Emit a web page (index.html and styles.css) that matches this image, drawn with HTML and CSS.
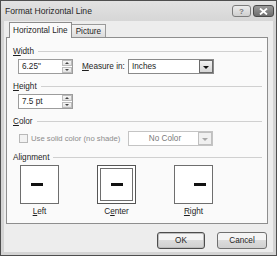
FILE: index.html
```html
<!DOCTYPE html>
<html lang="en">
<head>
    <meta charset="UTF-8">
    <title>Format Horizontal Line</title>
    <link rel="stylesheet" href="styles.css">
</head>
<body>
    <div class="window">
        <!-- Title bar -->
        <div class="titlebar">
            <span class="title">Format Horizontal Line</span>
            <span class="cap-btn help">?</span>
            <span class="cap-btn close">
                <svg width="9" height="7" viewBox="0 0 9 7"><path d="M1 0.5 L8 6.5 M8 0.5 L1 6.5" stroke="#fff" stroke-width="1.8"/></svg>
            </span>
        </div>

        <div class="client">
            <!-- Tabs -->
            <div class="tabs">
                <span class="tab active">Horizontal Line</span>
                <span class="tab">Picture</span>
            </div>

            <div class="panel">
                <div class="group-head"><span><u>W</u>idth</span></div>
                <div class="row">
                    <div class="spin">
                        <span class="value">6.25"</span>
                        <span class="arrows"><span class="up"></span><span class="down"></span></span>
                    </div>
                    <span class="field-label"><u>M</u>easure in:</span>
                    <div class="select">
                        <span class="value">Inches</span>
                        <span class="drop"></span>
                    </div>
                </div>

                <div class="group-head"><span><u>H</u>eight</span></div>
                <div class="row">
                    <div class="spin">
                        <span class="value">7.5 pt</span>
                        <span class="arrows"><span class="up"></span><span class="down"></span></span>
                    </div>
                </div>

                <div class="group-head"><span><u>C</u>olor</span></div>
                <div class="row color-row">
                    <span class="check"></span>
                    <span class="check-label">Use solid color (no shade)</span>
                    <div class="select disabled">
                        <span class="value">No Color</span>
                        <span class="drop"></span>
                    </div>
                </div>

                <div class="group-head"><span>Alignment</span></div>
                <div class="align-row">
                    <div class="align-item">
                        <div class="align-box left"><span class="bar"></span></div>
                        <span class="align-label"><u>L</u>eft</span>
                    </div>
                    <div class="align-item">
                        <div class="align-box center selected"><span class="bar"></span></div>
                        <span class="align-label">C<u>e</u>nter</span>
                    </div>
                    <div class="align-item">
                        <div class="align-box right"><span class="bar"></span></div>
                        <span class="align-label"><u>R</u>ight</span>
                    </div>
                </div>
            </div>

            <!-- Dialog buttons -->
            <div class="buttons">
                <span class="btn default">OK</span>
                <span class="btn">Cancel</span>
            </div>
        </div>
    </div>
</body>
</html>
```

FILE: styles.css
```css
body {
    margin: 0;
    font-family: "Liberation Sans", Arial, sans-serif;
    font-size: 8.2px;
    color: #1e1e1e;
}

u {
    text-decoration-thickness: 1px;
    text-underline-offset: 1px;
}

.window {
    width: 277px;
    height: 256px;
    box-sizing: border-box;
    border: 1px solid #4e4e4e;
    background: #d4d4d4;
    display: flex;
    flex-direction: column;
}

/* Title bar */
.titlebar {
    height: 20px;
    display: flex;
    align-items: center;
    padding: 0 2px 0 4px;
    background: linear-gradient(#e2e2e2, #d6d6d6);
}

.title {
    flex: 1;
    font-size: 8.6px;
    color: #262626;
}

.cap-btn {
    height: 10px;
    border: 1px solid #7c7c7c;
    border-radius: 3px;
    display: flex;
    align-items: center;
    justify-content: center;
}

.help {
    width: 17px;
    margin-right: 2px;
    background: linear-gradient(#ececec, #cfcfcf);
    color: #777;
    font-size: 8px;
    font-weight: bold;
}

.close {
    width: 19px;
    background: linear-gradient(#9a9a9a, #6e6e6e);
    border-color: #4a4a4a;
}

/* Client area */
.client {
    flex: 1;
    margin: 0 3px 3px;
    background: #ededed;
    display: flex;
    flex-direction: column;
}

.tabs {
    display: flex;
    align-items: flex-end;
    padding: 1px 0 0 5px;
    height: 16px;
    box-sizing: border-box;
    position: relative;
    z-index: 1;
}

.tab {
    height: 12px;
    padding: 0 4px;
    border: 1px solid #9a9a9a;
    border-bottom: none;
    background: linear-gradient(#f4f4f4, #dcdcdc);
    display: flex;
    align-items: center;
}

.tab.active {
    height: 15px;
    padding: 0 3px;
    margin-bottom: -1px;
    background: #fafafa;
    border-color: #8c8c8c;
}

.tab:not(.active) {
    border-left: none;
}

.panel {
    margin: 0 5px 0 2px;
    height: 187px;
    box-sizing: border-box;
    border: 1px solid #8e8e8e;
    background: #fafafa;
    padding: 8px 5px 0 6px;
}

.group-head {
    display: flex;
    align-items: center;
    height: 10px;
    gap: 4px;
}

.group-head::after {
    content: "";
    flex: 1;
    border-top: 1px solid #d0d0d0;
}

.row {
    display: flex;
    align-items: center;
    height: 15px;
    margin: 3px 0 7px 5px;
}

/* Spin box */
.spin {
    width: 55px;
    height: 15px;
    box-sizing: border-box;
    border: 1px solid #9c9c9c;
    background: #fff;
    display: flex;
}

.spin .value {
    flex: 1;
    padding-left: 3px;
    line-height: 13px;
}

.arrows {
    width: 10px;
    display: flex;
    flex-direction: column;
    gap: 1px;
}

.arrows span {
    flex: 1;
    border: 1px solid #bcbcbc;
    background: linear-gradient(#f6f6f6, #e2e2e2);
    position: relative;
}

.arrows span::after {
    content: "";
    position: absolute;
    left: 2px;
    border-left: 2px solid transparent;
    border-right: 2px solid transparent;
}

.arrows .up::after {
    top: 1px;
    border-bottom: 2px solid #444;
}

.arrows .down::after {
    top: 1px;
    border-top: 2px solid #444;
}

.field-label {
    margin: 0 0 0 9px;
    width: 46px;
}

/* Combo box */
.select {
    width: 86px;
    height: 15px;
    box-sizing: border-box;
    border: 1px solid #8a8a8a;
    background: #fff;
    display: flex;
}

.select .value {
    flex: 1;
    padding-left: 3px;
    line-height: 13px;
}

.drop {
    width: 12px;
    border: 1px solid #6a6a6a;
    background: linear-gradient(#f2f2f2, #d6d6d6);
    position: relative;
}

.drop::after {
    content: "";
    position: absolute;
    left: 3px;
    top: 5px;
    border-left: 3px solid transparent;
    border-right: 3px solid transparent;
    border-top: 3px solid #111;
}

.color-row {
    margin-top: 5px;
    margin-bottom: 6px;
}

.check {
    width: 9px;
    height: 9px;
    box-sizing: border-box;
    border: 1px solid #b8b8b8;
    background: #f2f2f2;
    margin-left: 1px;
}

.check-label {
    margin-left: 3px;
    color: #8c8c8c;
    font-size: 7.7px;
    width: 97px;
}

.select.disabled {
    border-color: #c4c4c4;
    width: 85px;
}

.select.disabled .value {
    text-align: center;
    color: #7a7a7a;
}

.select.disabled .drop {
    border-color: #c0c0c0;
    background: #f0f0f0;
}

.select.disabled .drop::after {
    border-top-color: #a8a8a8;
}

/* Alignment choices */
.align-row {
    display: flex;
    gap: 38px;
    margin: 3px 0 0 7px;
}

.align-item {
    display: flex;
    flex-direction: column;
    align-items: center;
    gap: 3px;
}

.align-box {
    width: 39px;
    height: 39px;
    box-sizing: border-box;
    border: 1px solid #6e6e6e;
    background: #fff;
    display: flex;
    align-items: center;
}

.align-box.left {
    padding-left: 10px;
}

.align-box.center {
    justify-content: center;
}

.align-box.right {
    justify-content: flex-end;
    padding-right: 6px;
}

.align-box.selected {
    outline: 1px solid #6e6e6e;
    outline-offset: -4px;
    border-color: #555;
}

.bar {
    width: 12px;
    height: 3px;
    background: #111;
}

/* Dialog buttons */
.buttons {
    display: flex;
    justify-content: flex-end;
    gap: 12px;
    margin: 8px 6px 0 0;
}

.btn {
    height: 17px;
    box-sizing: border-box;
    border: 1px solid #707070;
    border-radius: 3px;
    background: linear-gradient(#f4f4f4 50%, #dcdcdc 50%, #d0d0d0);
    display: flex;
    align-items: center;
    justify-content: center;
    width: 50px;
}

.btn.default {
    width: 48px;
    border-color: #4c4c4c;
    box-shadow: inset 0 0 0 1px #bdbdbd;
}
```
